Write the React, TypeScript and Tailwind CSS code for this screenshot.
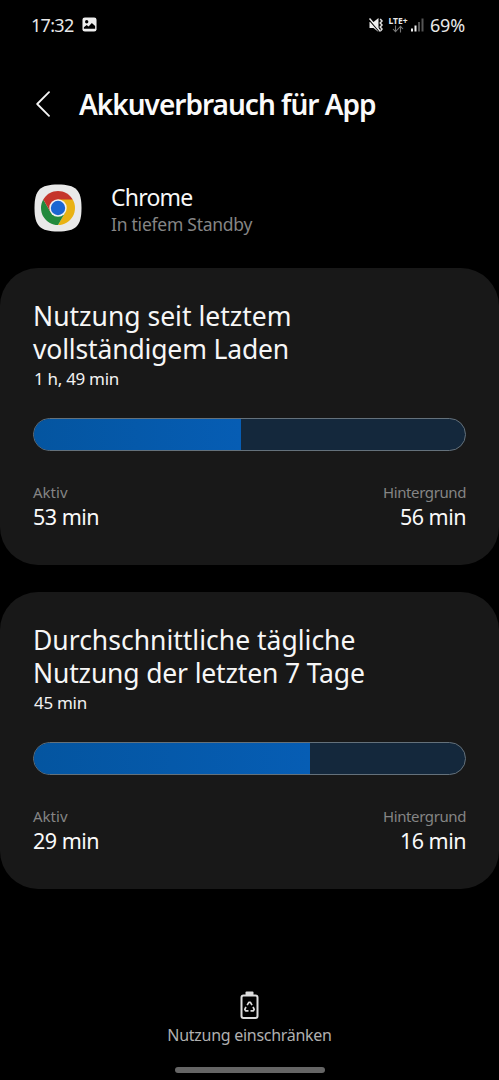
interface UsageCardProps {
  title: [string, string];
  total: string;
  active: string;
  background: string;
  fillWidth: number;
}

function UsageCard({ title, total, active, background, fillWidth }: UsageCardProps) {
  return (
    <section className="h-[297px] rounded-[38px] bg-[#181818] px-[33px] pt-8">
      <h2 className="whitespace-nowrap text-[26.5px] leading-[33px] text-[#f6f6f6]">
        <span className="block">{title[0]}</span>
        <span className="block tracking-[-0.16px]">{title[1]}</span>
      </h2>
      <p className="mt-px pl-px text-[17px] leading-6 tracking-[-0.3px] text-[#f2f2f2]">{total}</p>

      <div className="mt-[27px] flex h-[33px] overflow-hidden rounded-full border border-[#64717b] bg-[#14283c]">
        <div className="h-full bg-linear-to-r from-[#0455a0] to-[#065db4]" style={{ width: fillWidth }} />
      </div>

      <div className="mt-[31px] flex justify-between">
        <div>
          <div className="text-[15px] leading-5 text-[#858585]">Aktiv</div>
          <div className="mt-px text-[21.5px] leading-7 tracking-[-0.5px] text-[#fafafa]">{active}</div>
        </div>
        <div className="text-right">
          <div className="text-[15px] leading-5 tracking-[-0.4px] text-[#858585]">Hintergrund</div>
          <div className="mt-px text-[21.5px] leading-7 tracking-[-0.5px] text-[#fafafa]">{background}</div>
        </div>
      </div>
    </section>
  );
}

function StatusBar() {
  return (
    <header className="flex h-[49px] items-center justify-between pl-[31px] pr-[33px] text-[#e8e8e8]">
      <div className="flex items-center">
        <span className="w-[51px] whitespace-nowrap text-[18px] leading-6 tracking-[-0.7px]">17:32</span>
        <svg width="15" height="15" viewBox="0 0 16 16">
          <rect x="0.5" y="0.5" width="15" height="15" rx="2.5" fill="#eee" />
          <circle cx="5" cy="5" r="1.8" fill="#000" />
          <path d="M2 12.5V11l3-2.5 2 1.5 3.5-3.5 3.5 3v3z" fill="#000" />
        </svg>
      </div>
      <div className="flex items-center">
        <svg width="15" height="16" viewBox="0 0 15 16">
          <path d="M0.5 5h4L9.5 1v14L4.5 11h-4z" fill="#eee" />
          <path d="M0 2.7 10.5 14.8" stroke="#000" strokeWidth="1.3" />
          <path d="M0.5 1.5 11.5 14.5" stroke="#eee" strokeWidth="1.4" />
          <path d="M11.2 2l1.8 2-1.8 2 1.8 2-1.8 2 1.8 2-1.3 1.8" fill="none" stroke="#ddd" strokeWidth="1.5" />
        </svg>
        <div className="ml-1 flex w-[20px] flex-col items-center">
          <span className="whitespace-nowrap text-[8.5px] font-bold leading-[9px]">LTE+</span>
          <svg width="12" height="8" viewBox="0 0 12 8" fill="none" stroke="#777" strokeWidth="1.1">
            <path d="M3.5 0.5v6M1 4l2.5 2.7L6 4M8.5 7.5v-6M6 4l2.5-2.7L11 4" />
          </svg>
        </div>
        <svg className="ml-[3px]" width="14" height="14" viewBox="0 0 14 14">
          <rect x="0" y="10.5" width="2" height="3" fill="#eee" />
          <rect x="3.5" y="7.5" width="2" height="6" fill="#eee" />
          <rect x="7" y="4" width="2" height="9.5" fill="#555" />
          <rect x="10.5" y="0.5" width="2" height="13" fill="#555" />
        </svg>
        <span className="ml-[5px] w-[36px] whitespace-nowrap text-[18px] leading-6 tracking-[-0.2px]">69%</span>
      </div>
    </header>
  );
}

function ChromeLogo() {
  return (
    <svg width="48" height="48" viewBox="0 0 48 48">
      <path d="M24 0.5C42 0.5 47.5 6 47.5 24S42 47.5 24 47.5 0.5 42 0.5 24 6 0.5 24 0.5z" fill="#e9e9e9" />
      <path d="M24 24 9.28 15.5A17 17 0 0 1 38.72 15.5z" fill="#c5352b" />
      <path d="M24 15.5h14.72A17 17 0 0 1 24 41l7.36-12.75z" fill="#e9b213" />
      <path d="M9.28 15.5A17 17 0 0 0 24 41l7.36-12.75H16.64z" fill="#228a3d" />
      <path d="M9.28 15.5 16.64 28.25 24 24V15.5z" fill="#c5352b" />
      <circle cx="24" cy="24" r="8.7" fill="#f2f2f2" />
      <circle cx="24" cy="24" r="7.2" fill="#1b66d2" />
    </svg>
  );
}

export default function App() {
  return (
    <div className="flex h-[1080px] w-[499px] flex-col overflow-hidden bg-black font-['Noto_Sans',sans-serif]">
      <StatusBar />

      <div className="mt-[35px] flex h-10 items-center pl-[36px]">
        <svg width="14" height="26" viewBox="0 0 14 26" fill="none" stroke="#f5f5f5" strokeWidth="1.8" strokeLinecap="round" strokeLinejoin="round">
          <path d="M13 1.2 1.2 13 13 24.8" />
        </svg>
        <h1 className="ml-[29px] whitespace-nowrap text-[28px] font-semibold leading-10 tracking-[-1px] text-[#fafafa]">
          Akkuverbrauch für App
        </h1>
      </div>

      <div className="mt-[60px] flex pl-[34px]">
        <ChromeLogo />
        <div className="ml-[29px] whitespace-nowrap">
          <div className="text-[23px] leading-[27px] tracking-[-0.8px] text-[#f8f8f8]">Chrome</div>
          <div className="text-[17.5px] leading-[27px] tracking-[-0.25px] text-[#858585]">In tiefem Standby</div>
        </div>
      </div>

      <main className="mt-[30px] flex flex-col gap-[27px]">
        <UsageCard
          title={['Nutzung seit letztem', 'vollständigem Laden']}
          total="1 h, 49 min"
          active="53 min"
          background="56 min"
          fillWidth={207}
        />
        <UsageCard
          title={['Durchschnittliche tägliche', 'Nutzung der letzten 7 Tage']}
          total="45 min"
          active="29 min"
          background="16 min"
          fillWidth={276}
        />
      </main>

      <footer className="mt-auto flex flex-col items-center">
        <svg width="19" height="29" viewBox="0 0 19 29" fill="none">
          <rect x="5.5" y="0.5" width="8" height="4" rx="1" fill="#ddd" />
          <rect x="1.5" y="4.5" width="16" height="22.5" rx="2" stroke="#ddd" strokeWidth="2" />
          <g stroke="#ddd" strokeWidth="1.7" strokeLinejoin="round">
            <path d="M7.2 14.2 8.8 11.4h1.6l1.6 2.8" />
            <path d="M13 16l1.2 2.3-.8 1.5h-2.9" />
            <path d="M8.5 19.8H5.6l-.8-1.5L6 16" />
          </g>
        </svg>
        <span className="mt-[3px] whitespace-nowrap text-[16px] leading-6 tracking-[-0.28px] text-[#b0b0b0]">Nutzung einschränken</span>
        <div className="mb-[7px] mt-[20px] h-[6px] w-[150px] rounded-full bg-[#666]" />
      </footer>
    </div>
  );
}
